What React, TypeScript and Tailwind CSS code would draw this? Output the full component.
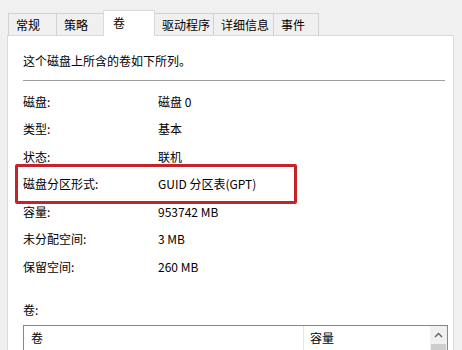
import React from 'react';

const tabs = ['常规', '策略', '卷', '驱动程序', '详细信息', '事件'];
const tabWidths = [48, 47, 51, 59, 60, 45];

const rows: { label: string; value: string; marked?: boolean }[] = [
  { label: '磁盘:', value: '磁盘 0' },
  { label: '类型:', value: '基本' },
  { label: '状态:', value: '联机' },
  { label: '磁盘分区形式:', value: 'GUID 分区表(GPT)', marked: true },
  { label: '容量:', value: '953742 MB' },
  { label: '未分配空间:', value: '3 MB' },
  { label: '保留空间:', value: '260 MB' },
];

export default function App() {
  const active = 2;

  return (
    <div
      className="w-[462px] h-[350px] overflow-hidden bg-[#f0f0f0] text-[12px] text-black"
      style={{ fontFamily: '"Noto Sans CJK SC", "Noto Sans", sans-serif' }}
    >
      {/* tab strip */}
      <div className="flex items-end h-[35px] pl-[8px]">
        {tabs.map((t, i) =>
          i === active ? (
            <div
              key={t}
              className="relative z-10 -mb-px h-[26px] flex items-start pt-[3px] pl-[9px] bg-white border border-b-0 border-[#d9d9d9] -ml-px"
              style={{ width: tabWidths[i] + 1 }}
            >
              {t}
            </div>
          ) : (
            <div
              key={t}
              className="h-[22px] flex items-center pl-[7px] bg-[#f0f0f0] border border-b-0 border-[#d0d0d0] -ml-px first:ml-0"
              style={{ width: tabWidths[i] + 1 }}
            >
              {t}
            </div>
          )
        )}
      </div>

      {/* panel */}
      <div className="ml-[7px] w-[447px] h-[330px] bg-white border border-[#d9d9d9] px-[15px] pt-[16px]">
        <div className="leading-[18px]">这个磁盘上所含的卷如下所列。</div>
        <div className="mt-[10px] h-px bg-[#a0a0a0] w-[422px]" />

        <div className="mt-[7px]">
          {rows.map((r) => (
            <div key={r.label} className="relative flex items-center h-[27.5px]">
              <div className="w-[135px]">{r.label}</div>
              <div>{r.value}</div>
              {r.marked && (
                <div className="absolute left-[-8px] top-[-7px] w-[282px] h-[40px] border-[3px] border-[#c3242b] rounded-[2px]" />
              )}
            </div>
          ))}
        </div>

        <div className="mt-[21px] leading-[16px]">卷:</div>

        {/* volume list */}
        <div className="mt-[7px] w-[425px] h-[60px] border border-[#828790] flex">
          <div className="flex-1 flex flex-col">
            <div className="flex h-[25px] border-b border-[#e5e5e5]">
              <div className="w-[280px] pl-[7px] flex items-center border-r border-[#e5e5e5]">卷</div>
              <div className="flex-1 pl-[6px] flex items-center">容量</div>
            </div>
            <div className="flex h-[22px]">
              <div className="w-[280px] pl-[7px] flex items-center">
                <div className="w-[12px] h-[8px] mt-[10px] rounded-[2px] bg-[#9a9a9a]" />
              </div>
              <div className="flex-1 pl-[6px] flex items-center pt-[10px]">1000 MB</div>
            </div>
          </div>
          <div className="w-[17px] bg-[#f0f0f0] flex flex-col">
            <div className="h-[18px] flex items-center justify-center">
              <svg width="9" height="6" viewBox="0 0 9 6">
                <path d="M1 5 L4.5 1.5 L8 5" fill="none" stroke="#606060" strokeWidth="1.4" />
              </svg>
            </div>
            <div className="mx-[1px] flex-1 bg-[#cdcdcd]" />
          </div>
        </div>
      </div>
    </div>
  );
}
